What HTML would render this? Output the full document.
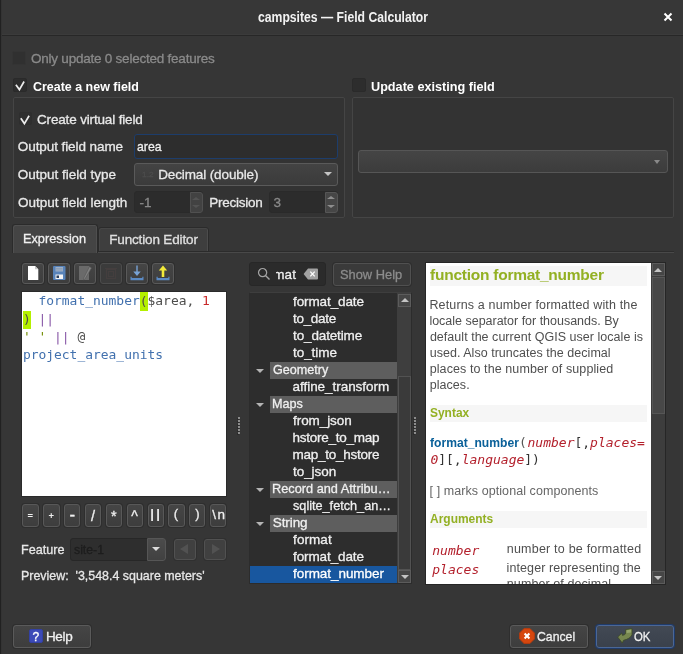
<!DOCTYPE html>
<html lang="en"><head><meta charset="utf-8"><title>Field Calculator</title>
<style>
html,body{margin:0;padding:0;}
body{width:683px;height:654px;background:#363636;overflow:hidden;position:relative;font-family:"Liberation Sans",sans-serif;font-size:13px;color:#e6e6e6;}
*{box-sizing:border-box;}
.a{position:absolute;}
.t{position:absolute;white-space:pre;-webkit-text-stroke:0.3px;line-height:20px;height:20px;transform-origin:0 50%;}
.titlebar{left:0;top:0;width:683px;height:35px;background:#373737;border-bottom:1px solid #3b3b3b;}
.tline{left:0;top:35px;width:683px;height:1px;background:#272727;}
.ledge{left:0;top:0;width:1px;height:654px;background:#212121;}
.ledge2{left:1px;top:0;width:1px;height:654px;background:#333333;}
.cb{width:13px;height:13px;border-radius:2px;background:#2d2d2d;border:1px solid #2a2a2a;}
.cb.dis{background:#303030;border-color:#343434;}
.frame{border:1px solid #454545;border-radius:2px;background:#333333;}
.inp{background:#2b2b2b;border:1px solid #272727;border-radius:3px;}
.inp.focus{border:1px solid #1d3d6b;background:#2d2d2d;}
.btn{background:linear-gradient(#454545,#3d3d3d);border:1px solid #5a5a5a;border-radius:3px;box-shadow:0 0 0 1px #2e2e2e;}
.btn.dis{background:#3b3b3b;border-color:#4c4c4c;box-shadow:0 0 0 1px #303030;}
.combo{background:linear-gradient(#434343,#3b3b3b);border:1px solid #5a5a5a;border-radius:3px;}
.arrow{width:0;height:0;border-left:4px solid transparent;border-right:4px solid transparent;border-top:4.4px solid #c4c4c4;}
.arrow.up{border-top:none;border-bottom:4.4px solid #c4c4c4;}
.arrow.dis{border-top-color:#6a6a6a;}
.tab{border:1px solid #4a4a4a;border-bottom:none;border-radius:3px 3px 0 0;}
.white{background:#ffffff;}
.dark{background:#2d2d2d;}
.cat{left:270px;width:127px;height:17px;background:#5e5e5e;}
.sb{background:#3e3e3e;}
.sbbtn{background:#464646;border:1px solid #5c5c5c;}
.help{overflow:hidden;font-family:"Liberation Sans",sans-serif;}
.strip{left:430px;width:217px;background:#f6f6f6;}
.code{margin:0;font-family:"DejaVu Sans Mono","Liberation Mono",monospace;font-size:12.95px;line-height:18px;}
.bl{color:#4271ae}.dk{color:#4d4d4c}.rd{color:#c82829}.pu{color:#8959a8}.gr{color:#718c00}
.op{top:504px;width:16.3px;height:23px;border-color:#585858;}
#root{position:absolute;left:0;top:0;width:683px;height:654px;will-change:transform;}
.help .t{-webkit-text-stroke:0;}
.arrow.sm{border-left-width:4.2px;border-right-width:4.2px;border-top:4.6px solid #b4b4b4;}

</style></head>
<body>
<div id="root">
<div class="a titlebar"></div><div class="a tline"></div>
<div class="a ledge"></div><div class="a ledge2"></div>
<span class="t" style="left:257.6px;top:6.9px;font-size:14.5px;color:#f2f2f2;font-weight:700;-webkit-text-stroke:0;transform:scaleX(0.8407);">campsites — Field Calculator</span>
<svg class="a" style="left:663px;top:12px" width="10" height="10" viewBox="0 0 10 10"><path d="M1.5 1.5 L8.5 8.5 M8.5 1.5 L1.5 8.5" stroke="#ffffff" stroke-width="2" fill="none"/></svg>

<!-- top checkbox -->
<div class="a cb dis" style="left:12px;top:51px;width:14px;height:14px"></div>
<span class="t" style="left:31.0px;top:49.3px;font-size:13.5px;color:#8a8a8a;letter-spacing:-0.23px;">Only update 0 selected features</span>

<!-- create new field group -->
<div class="a cb" style="left:13px;top:78px;width:14px;height:14px"></div>
<svg class="a" style="left:14px;top:80px" width="12" height="12" viewBox="0 0 12 12"><path d="M1.9 4.8 L5.4 9.6 L10.1 1.5" stroke="#ececec" stroke-width="1.7" fill="none"/></svg>
<span class="t" style="left:32.5px;top:76.7px;font-size:13.5px;color:#ffffff;font-weight:700;-webkit-text-stroke:0;transform:scaleX(0.9225);">Create a new field</span>
<div class="a frame" style="left:13px;top:97px;width:332px;height:121px"></div>
<div class="a cb" style="left:19px;top:112px;background:#2f2f2f;border-color:#2e2e2e"></div>
<svg class="a" style="left:19px;top:114px" width="12" height="12" viewBox="0 0 12 12"><path d="M1.8 4.3 L5.4 9.6 L10.1 1.7" stroke="#ececec" stroke-width="1.7" fill="none"/></svg>
<span class="t" style="left:37.0px;top:109.5px;font-size:13.5px;color:#e8e8e8;letter-spacing:-0.16px;">Create virtual field</span>
<span class="t" style="left:17.8px;top:136.5px;font-size:13.5px;color:#e8e8e8;letter-spacing:-0.08px;">Output field name</span>
<div class="a inp focus" style="left:134px;top:134px;width:204px;height:25px"></div>
<span class="t" style="left:136.7px;top:136.5px;font-size:13.5px;color:#f0f0f0;transform:scaleX(0.9084);">area</span>
<span class="t" style="left:17.8px;top:164.7px;font-size:13.5px;color:#e8e8e8;letter-spacing:-0.01px;">Output field type</span>
<div class="a combo" style="left:134px;top:163px;width:204px;height:23px"></div>
<span class="t" style="left:141.5px;top:165.2px;font-size:8px;color:#4c4c4c;transform:scaleX(1.0476);">1.2</span>
<span class="t" style="left:158.2px;top:165.0px;font-size:13.5px;color:#e8e8e8;letter-spacing:-0.12px;">Decimal (double)</span>
<div class="a arrow" style="left:323.6px;top:172.2px"></div>
<span class="t" style="left:18.0px;top:192.9px;font-size:13.5px;color:#e8e8e8;letter-spacing:-0.02px;">Output field length</span>
<div class="a inp" style="left:134px;top:191px;width:69px;height:22px;background:#2c2c2c;border-color:#2a2a2a"></div>
<div class="a" style="left:190px;top:192px;width:13px;height:21px;background:#424242;border:1px solid #505050;border-radius:0 3px 3px 0"></div>
<div class="a" style="left:192.3px;top:196.5px;width:0;height:0;border-left:4.2px solid transparent;border-right:4.2px solid transparent;border-bottom:3.6px solid #535353"></div>
<div class="a" style="left:192.3px;top:205.3px;width:0;height:0;border-left:4.2px solid transparent;border-right:4.2px solid transparent;border-top:3.6px solid #535353"></div>
<span class="t" style="left:139.6px;top:192.9px;font-size:13.5px;color:#8a8a8a;">-1</span>
<span class="t" style="left:209.3px;top:192.9px;font-size:13.5px;color:#e8e8e8;letter-spacing:-0.26px;">Precision</span>
<div class="a inp" style="left:269px;top:191px;width:69px;height:22px;background:#2c2c2c;border-color:#2a2a2a"></div>
<div class="a" style="left:325px;top:192px;width:13px;height:21px;background:#464646;border:1px solid #565656;border-radius:0 3px 3px 0"></div>
<div class="a" style="left:326.6px;top:196.3px;width:0;height:0;border-left:4.2px solid transparent;border-right:4.2px solid transparent;border-bottom:3.6px solid #8e8e8e"></div>
<div class="a" style="left:326.6px;top:205.3px;width:0;height:0;border-left:4.2px solid transparent;border-right:4.2px solid transparent;border-top:3.6px solid #8e8e8e"></div>
<span class="t" style="left:273.6px;top:192.9px;font-size:13.5px;color:#8a8a8a;">3</span>

<!-- update existing group -->
<div class="a cb" style="left:352px;top:78px;width:14px;height:14px"></div>
<span class="t" style="left:371.3px;top:76.7px;font-size:13.5px;color:#ffffff;font-weight:700;-webkit-text-stroke:0;transform:scaleX(0.9372);">Update existing field</span>
<div class="a frame" style="left:352px;top:97px;width:322px;height:121px"></div>
<div class="a combo" style="left:358px;top:150px;width:310px;height:23px;background:linear-gradient(#454545,#3c3c3c);border-color:#565656"></div>
<div class="a arrow dis" style="left:654px;top:159.6px;border-left-width:3.6px;border-right-width:3.6px;border-top:4px solid #8a8a8a"></div>

<!-- tabs -->
<div class="a" style="left:98px;top:251px;width:576px;height:1px;background:#2c2c2c"></div>
<div class="a" style="left:13px;top:252px;width:661px;height:1px;background:#494949"></div>
<div class="a" style="left:12px;top:224px;width:86px;height:29px;background:#444444;border:1px solid #2b2b2b;border-bottom:none;border-radius:3px 3px 0 0;box-shadow:inset 1px 1px 0 #4f4f4f,inset -1px 0 0 #4f4f4f"></div>
<div class="a" style="left:98px;top:227px;width:111px;height:25px;background:#3e3e3e;border:1px solid #2b2b2b;border-radius:3px 3px 0 0;box-shadow:inset 1px 1px 0 #464646,inset -1px 0 0 #4c4c4c"></div>
<span class="t" style="left:23.4px;top:229.0px;font-size:13.5px;color:#f0f0f0;transform:scaleX(0.9431);">Expression</span>
<span class="t" style="left:109.2px;top:229.7px;font-size:13.5px;color:#e0e0e0;letter-spacing:-0.15px;">Function Editor</span>

<!-- toolbar -->
<div class="a btn" style="left:22px;top:263px;width:22px;height:21px"></div>
<div class="a btn" style="left:48px;top:263px;width:22px;height:21px"></div>
<div class="a btn" style="left:74px;top:263px;width:22px;height:21px"></div>
<div class="a btn dis" style="left:100px;top:263px;width:22px;height:21px"></div>
<div class="a btn" style="left:126px;top:263px;width:22px;height:21px"></div>
<div class="a btn" style="left:152px;top:263px;width:22px;height:21px"></div>
<svg class="a" style="left:22px;top:263px" width="152" height="21" viewBox="0 0 152 21">
 <!-- new -->
 <path d="M6 3 H13 L16.3 6.3 V17 H6 Z" fill="#ffffff"/><path d="M13 3 V6.3 H16.3 Z" fill="#c8c8c8"/>
 <!-- save -->
 <g transform="translate(26,0)"><rect x="5" y="3" width="12.5" height="14" rx="1" fill="#5883b9"/><rect x="7.5" y="4" width="7.5" height="4.5" fill="#9fb0c6"/><path d="M8 5.5 H14.5 M8 7 H14.5" stroke="#7f93ad" stroke-width="0.6"/><rect x="7.5" y="11.5" width="7.5" height="4.5" fill="#f4f4f4"/><rect x="8.5" y="12.5" width="2.5" height="2.5" fill="#2b3f5c"/></g>
 <!-- edit (disabled) -->
 <g transform="translate(52,0)"><rect x="5" y="3" width="10" height="14" fill="#6a6a6a"/><path d="M15.5 3.5 L17.5 5 L11 16 L9.5 17 L9.7 15 Z" fill="#808080" stroke="#555" stroke-width="0.6"/></g>
 <!-- delete (disabled) -->
 <g transform="translate(78,0)" fill="none" stroke="#443e3e" stroke-width="1"><rect x="6.5" y="6.5" width="9" height="9"/><rect x="8.5" y="8.5" width="5" height="5"/><path d="M5 5.5 H17"/></g>
 <!-- import -->
 <g transform="translate(104,0)"><path d="M11 2.5 V11" stroke="#78a3d6" stroke-width="1.4"/><path d="M7.3 8.6 L11 13 L14.7 8.6 Z" fill="#78a3d6"/><path d="M4.5 13.8 V17.2 H17.5 V13.8 H16.3 V15 H5.7 V13.8 Z" fill="#5b8ac4"/></g>
 <!-- export -->
 <g transform="translate(130,0)"><path d="M11 6 V14" stroke="#f2ea3a" stroke-width="2.6"/><path d="M6.8 7.5 L11 2.5 L15.2 7.5 Z" fill="#f2ea3a"/><path d="M4.5 13.8 V17.2 H17.5 V13.8 H16.3 V15 H5.7 V13.8 Z" fill="#5b8ac4"/></g>
</svg>

<!-- editor -->
<div class="a" style="left:21px;top:291px;width:206px;height:206px;background:#2a2a2a"></div>
<div class="a white" style="left:22px;top:292px;width:204px;height:204px"></div>
<div class="a" style="left:139.8px;top:292px;width:8px;height:18.5px;background:#b4f000"></div>
<div class="a" style="left:23px;top:310.5px;width:8px;height:18px;background:#b4f000"></div>
<pre class="a code" style="left:22.9px;top:292px"><span class="bl">  format_number</span><span class="dk">($area, </span><span class="rd">1</span>
<span class="dk">) </span><span class="pu">||</span>
<span class="gr">' ' </span><span class="pu">||</span><span class="dk"> @</span>
<span class="bl">project_area_units</span></pre>

<!-- operator buttons -->
<div class="a btn op" style="left:22.3px"></div><div class="a btn op" style="left:43.3px"></div><div class="a btn op" style="left:64.2px"></div><div class="a btn op" style="left:85.2px"></div><div class="a btn op" style="left:106.1px"></div><div class="a btn op" style="left:126.8px"></div><div class="a btn op" style="left:147.5px"></div><div class="a btn op" style="left:168.3px"></div><div class="a btn op" style="left:189.2px"></div><div class="a btn op" style="left:210.2px"></div>
<span class="t" style="left:27.4px;top:505.6px;font-size:9.5px;color:#f0f0f0;font-weight:700;-webkit-text-stroke:0;">=</span><span class="t" style="left:48.4px;top:505.6px;font-size:9.5px;color:#f0f0f0;font-weight:700;-webkit-text-stroke:0;">+</span><span class="t" style="left:69.6px;top:504.9px;font-size:17px;color:#f0f0f0;">-</span><span class="t" style="left:91.0px;top:505.9px;font-size:14.5px;color:#f0f0f0;">/</span><span class="t" style="left:111.0px;top:505.5px;font-size:14.5px;color:#f0f0f0;">*</span><span class="t" style="left:131.3px;top:505.5px;font-size:14px;color:#f0f0f0;">^</span><span class="t" style="left:150.3px;top:504.3px;font-size:13px;color:#f0f0f0;font-weight:700;-webkit-text-stroke:0;letter-spacing:2.4px;">||</span><span class="t" style="left:173.8px;top:504.2px;font-size:13px;color:#f0f0f0;">(</span><span class="t" style="left:195.2px;top:504.2px;font-size:13px;color:#f0f0f0;">)</span>
<div class="a" style="left:210px;top:504px;width:16px;height:23px;overflow:hidden"><span class="t" style="left:2.2px;top:1.1px;font-size:13.5px;color:#f0f0f0;letter-spacing:1.6px;">\n</span></div>

<!-- feature row -->
<span class="t" style="left:20.6px;top:539.7px;font-size:13.5px;color:#e8e8e8;transform:scaleX(0.9333);">Feature</span>
<div class="a inp" style="left:70px;top:538px;width:96px;height:23px;background:#2e2e2e"></div>
<div class="a" style="left:147px;top:538px;width:19px;height:23px;background:linear-gradient(#4b4b4b,#414141);border:1px solid #565656;border-radius:0 3px 3px 0"></div>
<div class="a arrow" style="left:152.2px;top:547.3px;border-top-color:#dcdcdc"></div>
<span class="t" style="left:74.1px;top:539.7px;font-size:13.5px;color:#1d1d1d;transform:scaleX(0.9085);">site-1</span>
<div class="a btn dis" style="left:174px;top:539px;width:22px;height:21px;background:#404040;border-color:#515151"></div>
<div class="a btn dis" style="left:204px;top:539px;width:22px;height:21px;background:#404040;border-color:#515151"></div>
<div class="a" style="left:180px;top:544px;width:0;height:0;border-top:5.5px solid transparent;border-bottom:5.5px solid transparent;border-right:8px solid #525252"></div>
<div class="a" style="left:212px;top:544px;width:0;height:0;border-top:5.5px solid transparent;border-bottom:5.5px solid transparent;border-left:8px solid #525252"></div>
<span class="t" style="left:20.6px;top:566.4px;font-size:13.5px;color:#e8e8e8;transform:scaleX(0.9202);">Preview:  '3,548.4 square meters'</span>

<!-- splitter handles -->
<div class="a" style="left:237px;top:418px;width:2px;height:18px;background:repeating-linear-gradient(#2b2b2b 0 2px,transparent 2px 3px)"></div>
<div class="a" style="left:238px;top:417px;width:2px;height:18px;background:repeating-linear-gradient(#8c8c8c 0 2px,transparent 2px 3px)"></div>
<div class="a" style="left:413px;top:418px;width:2px;height:18px;background:repeating-linear-gradient(#2b2b2b 0 2px,transparent 2px 3px)"></div>
<div class="a" style="left:414px;top:417px;width:2px;height:18px;background:repeating-linear-gradient(#8c8c8c 0 2px,transparent 2px 3px)"></div>

<!-- search -->
<div class="a inp" style="left:249px;top:262px;width:77px;height:24px"></div>
<svg class="a" style="left:256px;top:266px" width="16" height="16" viewBox="0 0 16 16"><circle cx="6.6" cy="6.6" r="4.1" stroke="#a4a4a4" stroke-width="1.2" fill="none"/><path d="M9.7 9.7 L13.5 13.5" stroke="#a4a4a4" stroke-width="1.4"/></svg>
<div class="a" style="left:276px;top:263px;width:24px;height:22px;overflow:hidden"><span class="t" style="left:-18.5px;top:1.7px;font-size:13.5px;color:#f0f0f0;letter-spacing:0.03px;">format</span></div>
<svg class="a" style="left:303px;top:268px" width="16" height="12" viewBox="0 0 16 12"><path d="M5 0.5 H14 Q15 0.5 15 1.5 V10.5 Q15 11.5 14 11.5 H5 L0.6 6 Z" fill="#a2a2a2"/><path d="M7.3 3.6 L11.7 8.4 M11.7 3.6 L7.3 8.4" stroke="#ffffff" stroke-width="1.3"/></svg>
<div class="a btn" style="left:333px;top:263px;width:78px;height:23px;background:#3a3a3a;border-color:#505050"></div>
<span class="t" style="left:340.3px;top:264.7px;font-size:13.5px;color:#8c8c8c;transform:scaleX(0.9519);">Show Help</span>

<!-- tree -->
<div class="a dark" style="left:249px;top:292px;width:163px;height:292px;border:1px solid #2c2c2c;border-top-color:#3e3e3e"></div>
<div class="a cat" style="top:362px"></div>
<div class="a cat" style="top:396px"></div>
<div class="a cat" style="top:481px"></div>
<div class="a cat" style="top:515px"></div>
<div class="a" style="left:250px;top:566px;width:147px;height:17px;background:#18579f"></div>
<div class="a arrow sm" style="left:256.2px;top:368.5px"></div>
<div class="a arrow sm" style="left:256.2px;top:402.5px"></div>
<div class="a arrow sm" style="left:256.2px;top:487.5px"></div>
<div class="a arrow sm" style="left:256.2px;top:521.5px"></div>
<span class="t" style="left:293.1px;top:291.9px;font-size:13.5px;color:#f0f0f0;letter-spacing:-0.12px;">format_date</span>
<span class="t" style="left:293.1px;top:308.9px;font-size:13.5px;color:#f0f0f0;letter-spacing:-0.33px;">to_date</span>
<span class="t" style="left:293.1px;top:325.9px;font-size:13.5px;color:#f0f0f0;letter-spacing:-0.15px;">to_datetime</span>
<span class="t" style="left:293.1px;top:342.9px;font-size:13.5px;color:#f0f0f0;letter-spacing:-0.08px;">to_time</span>
<span class="t" style="left:272.8px;top:359.9px;font-size:13.5px;color:#f0f0f0;transform:scaleX(0.9339);">Geometry</span>
<span class="t" style="left:292.6px;top:376.9px;font-size:13.5px;color:#f0f0f0;letter-spacing:-0.05px;">affine_transform</span>
<span class="t" style="left:272.4px;top:393.9px;font-size:13.5px;color:#f0f0f0;transform:scaleX(0.9354);">Maps</span>
<span class="t" style="left:293.1px;top:410.9px;font-size:13.5px;color:#f0f0f0;letter-spacing:-0.08px;">from_json</span>
<span class="t" style="left:292.4px;top:427.9px;font-size:13.5px;color:#f0f0f0;letter-spacing:-0.24px;">hstore_to_map</span>
<span class="t" style="left:292.4px;top:444.9px;font-size:13.5px;color:#f0f0f0;letter-spacing:-0.24px;">map_to_hstore</span>
<span class="t" style="left:293.1px;top:461.9px;font-size:13.5px;color:#f0f0f0;letter-spacing:-0.08px;">to_json</span>
<span class="t" style="left:272.4px;top:478.9px;font-size:13.5px;color:#f0f0f0;transform:scaleX(0.9450);">Record and Attribu…</span>
<span class="t" style="left:292.9px;top:495.9px;font-size:13.5px;color:#f0f0f0;transform:scaleX(0.9385);">sqlite_fetch_an…</span>
<span class="t" style="left:272.8px;top:512.9px;font-size:13.5px;color:#f0f0f0;letter-spacing:-0.10px;">String</span>
<span class="t" style="left:293.1px;top:529.9px;font-size:13.5px;color:#f0f0f0;letter-spacing:0.07px;">format</span>
<span class="t" style="left:293.1px;top:546.9px;font-size:13.5px;color:#f0f0f0;letter-spacing:-0.12px;">format_date</span>
<span class="t" style="left:293.1px;top:563.9px;font-size:13.5px;color:#ffffff;letter-spacing:-0.06px;">format_number</span>
<!-- tree scrollbar -->
<div class="a sb" style="left:397px;top:293px;width:14px;height:290px"></div>
<div class="a sbbtn" style="left:398px;top:294px;width:13px;height:13px"></div>
<div class="a arrow up" style="left:400.5px;top:298px"></div>
<div class="a" style="left:398px;top:376px;width:13px;height:194px;background:#3a3a3a;border:1px solid #525252"></div>
<div class="a sbbtn" style="left:398px;top:570px;width:13px;height:13px"></div>
<div class="a arrow" style="left:400.5px;top:575px"></div>

<!-- help panel -->
<div class="a" style="left:425px;top:262px;width:241px;height:323px;background:#262626"></div>
<div class="a white" style="left:426px;top:263px;width:225px;height:321px"></div>
<div class="a help" style="left:0;top:263px;width:651px;height:321px"><div class="a" style="left:0;top:-263px;width:652px;height:700px">
<div class="a strip" style="top:265.5px;height:20.5px"></div>
<span class="t" style="left:430.1px;top:265.1px;font-size:15.5px;color:#93b023;font-weight:700;-webkit-text-stroke:0;letter-spacing:-0.25px;">function format_number</span>
<span class="t" style="left:429.4px;top:294.9px;font-size:12.5px;color:#4f4f4f;letter-spacing:0.15px;">Returns a number formatted with the</span>
<span class="t" style="left:429.4px;top:310.9px;font-size:12.5px;color:#4f4f4f;letter-spacing:-0.01px;">locale separator for thousands. By</span>
<span class="t" style="left:429.9px;top:326.9px;font-size:12.5px;color:#4f4f4f;letter-spacing:0.03px;">default the current QGIS user locale is</span>
<span class="t" style="left:429.7px;top:342.9px;font-size:12.5px;color:#4f4f4f;letter-spacing:0.03px;">used. Also truncates the decimal</span>
<span class="t" style="left:429.7px;top:358.9px;font-size:12.5px;color:#4f4f4f;letter-spacing:0.09px;">places to the number of supplied</span>
<span class="t" style="left:429.7px;top:374.9px;font-size:12.5px;color:#4f4f4f;letter-spacing:0.06px;">places.</span>
<div class="a strip" style="top:404.5px;height:17px"></div>
<span class="t" style="left:430.0px;top:403.0px;font-size:13.5px;color:#93b023;font-weight:700;-webkit-text-stroke:0;transform:scaleX(0.8851);">Syntax</span>
<span class="t" style="left:430.2px;top:433.2px;font-size:13.5px;color:#0a6099;font-weight:700;-webkit-text-stroke:0;transform:scaleX(0.8975);">format_number</span>
<span class="t" style="left:519.0px;top:433.2px;font-size:13px;color:#555555;font-family:'DejaVu Sans Mono', 'Liberation Mono', monospace;">(</span>
<span class="t" style="left:527.5px;top:433.2px;font-size:13px;color:#b3202c;font-family:'DejaVu Sans Mono', 'Liberation Mono', monospace;font-style:italic;">number</span>
<span class="t" style="left:574.5px;top:433.2px;font-size:13px;color:#333333;font-family:'DejaVu Sans Mono', 'Liberation Mono', monospace;">[,</span>
<span class="t" style="left:590.1px;top:433.2px;font-size:13px;color:#b3202c;font-family:'DejaVu Sans Mono', 'Liberation Mono', monospace;font-style:italic;">places=</span>
<span class="t" style="left:430.4px;top:450.2px;font-size:13px;color:#b3202c;font-family:'DejaVu Sans Mono', 'Liberation Mono', monospace;font-style:italic;">0</span>
<span class="t" style="left:438.2px;top:450.2px;font-size:13px;color:#333333;font-family:'DejaVu Sans Mono', 'Liberation Mono', monospace;">][,</span>
<span class="t" style="left:461.7px;top:450.2px;font-size:13px;color:#b3202c;font-family:'DejaVu Sans Mono', 'Liberation Mono', monospace;font-style:italic;">language</span>
<span class="t" style="left:524.3px;top:450.2px;font-size:13px;color:#333333;font-family:'DejaVu Sans Mono', 'Liberation Mono', monospace;">])</span>
<span class="t" style="left:429.6px;top:481.1px;font-size:12.5px;color:#666666;letter-spacing:0.07px;">[ ] marks optional components</span>
<div class="a strip" style="top:511px;height:17px"></div>
<span class="t" style="left:430.2px;top:509.2px;font-size:13.5px;color:#93b023;font-weight:700;-webkit-text-stroke:0;transform:scaleX(0.8879);">Arguments</span>
<span class="t" style="left:432.3px;top:540.7px;font-size:13px;color:#b3202c;font-family:'DejaVu Sans Mono', 'Liberation Mono', monospace;font-style:italic;">number</span>
<span class="t" style="left:432.3px;top:559.7px;font-size:13px;color:#b3202c;font-family:'DejaVu Sans Mono', 'Liberation Mono', monospace;font-style:italic;">places</span>
<span class="t" style="left:506.8px;top:539.2px;font-size:12.5px;color:#4f4f4f;letter-spacing:0.21px;">number to be formatted</span>
<span class="t" style="left:506.6px;top:558.4px;font-size:12.5px;color:#4f4f4f;letter-spacing:0.09px;">integer representing the</span>
<span class="t" style="left:506.8px;top:574.4px;font-size:12.5px;color:#4f4f4f;letter-spacing:0.09px;">number of decimal</span>
</div></div>
<!-- help scrollbar -->
<div class="a" style="left:651px;top:263px;width:14px;height:321px;background:#3d3d3d"></div>
<div class="a sbbtn" style="left:651.5px;top:263px;width:13.5px;height:13px"></div>
<div class="a arrow up" style="left:654.3px;top:267.5px"></div>
<div class="a" style="left:651.5px;top:277px;width:13.5px;height:137px;background:#484848;border:1px solid #565656"></div>
<div class="a sbbtn" style="left:651.5px;top:571px;width:13.5px;height:13px"></div>
<div class="a arrow" style="left:654.3px;top:575.5px"></div>

<!-- bottom buttons -->
<div class="a btn" style="left:13px;top:625px;width:78px;height:23px"></div>
<div class="a" style="left:29px;top:629px;width:14px;height:14px;background:#3c4ab8;border-radius:2px;border:1px solid #3341a4"></div>
<span class="t" style="left:32.6px;top:626.7px;font-size:12px;color:#ffffff;">?</span>
<span class="t" style="left:45.9px;top:627.0px;font-size:13.5px;color:#f0f0f0;letter-spacing:-0.33px;">Help</span>
<div class="a btn" style="left:510px;top:625px;width:78px;height:23px"></div>
<svg class="a" style="left:518.6px;top:628px" width="16" height="16" viewBox="0 0 16 16"><path d="M5 0.6 H11 L15.4 5 V11 L11 15.4 H5 L0.6 11 V5 Z" fill="#d6470e" stroke="#b53c10" stroke-width="1"/><path d="M5.6 5.6 L10.4 10.4 M10.4 5.6 L5.6 10.4" stroke="#fff" stroke-width="2.1"/></svg>
<span class="t" style="left:537.0px;top:627.0px;font-size:13.5px;color:#f0f0f0;transform:scaleX(0.9080);">Cancel</span>
<div class="a btn" style="left:596px;top:625px;width:78px;height:23px;background:linear-gradient(#424954,#3a414c);border-color:#4b6796;box-shadow:0 0 0 1px #1f3b6a"></div>
<svg class="a" style="left:617px;top:627.5px" width="16" height="16" viewBox="0 0 16 16"><path d="M8.7 1.5 L15 0.7 L15 6.6 Q13 11 6.5 12.3 L5.3 15 L0.7 9.1 L4.7 5.2 L5.5 7.4 Q8.5 7 8.7 5 Z" fill="#76864f" stroke="#3d4a26" stroke-width="0.8" stroke-linejoin="round"/><path d="M9.5 2.2 L14.2 1.6 L14.2 4.5 L9.5 5 Z" fill="#95a56c"/></svg>
<span class="t" style="left:633.6px;top:627.0px;font-size:13.5px;color:#f0f0f0;transform:scaleX(0.8421);">OK</span>

</div>
</body></html>
